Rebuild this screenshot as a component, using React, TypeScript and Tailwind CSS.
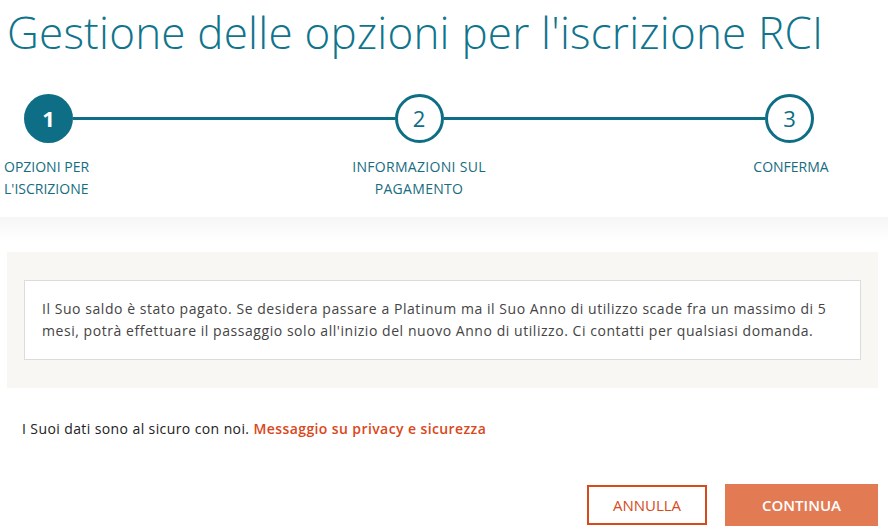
import React from "react"

const steps = [
  { n: 1, active: true },
  { n: 2, active: false },
  { n: 3, active: false },
]

function StepCircle({ n, active }: { n: number; active: boolean }) {
  return (
    <div
      className={`w-[49px] h-[49px] rounded-full flex items-center justify-center shrink-0 text-[22px] ${
        active ? "bg-[#0d6e85] text-white font-bold" : "bg-white border-[3px] border-[#0d6e85] text-[#0d6e85]"
      }`}
    >
      {n}
    </div>
  )
}

export default function App() {
  return (
    <div className="w-[888px] h-[532px] bg-white overflow-hidden font-['Open_Sans',sans-serif]">
      <h1 className="pl-[7px] pt-[6px] text-[44px] leading-[52px] font-light text-[#10748d] tracking-[0.2px] whitespace-nowrap">
        Gestione delle opzioni per l'iscrizione RCI
      </h1>

      {/* stepper */}
      <div className="mt-[36px] ml-[24px] w-[790px] flex items-center">
        {steps.map((s, i) => (
          <React.Fragment key={s.n}>
            <StepCircle n={s.n} active={s.active} />
            {i < steps.length - 1 && <div className="flex-1 h-[3px] bg-[#0d6e85]" />}
          </React.Fragment>
        ))}
      </div>

      <div className="mt-[13px] pl-[4px] flex text-[14px] leading-[22px] text-[#176c81] uppercase">
        <div className="w-[315px]">Opzioni per<br />l'iscrizione</div>
        <div className="w-[200px] text-center tracking-[0.3px]">Informazioni sul<br />pagamento</div>
        <div className="ml-[202px] w-[140px] text-center">Conferma</div>
      </div>

      {/* content */}
      <div className="mt-[17px] pt-[35px] bg-gradient-to-b from-[#f6f6f6] to-white to-[25px]">
        <div className="mx-[7px] w-[871px] bg-[#f8f7f4] px-[17px] py-[28px]">
          <div className="bg-white border border-[#dcdcdc] px-[17px] py-[17px] text-[14px] leading-[22px] text-[#444] tracking-[0.55px] whitespace-nowrap">
            Il Suo saldo è stato pagato. Se desidera passare a Platinum ma il Suo Anno di utilizzo scade fra un massimo di 5
            <br />
            mesi, potrà effettuare il passaggio solo all'inizio del nuovo Anno di utilizzo. Ci contatti per qualsiasi domanda.
          </div>
        </div>

        <p className="mt-[30px] pl-[22px] text-[14px] text-[#222] tracking-[0.4px]">
          I Suoi dati sono al sicuro con noi.{" "}
          <a className="text-[#d9471a] font-semibold">Messaggio su privacy e sicurezza</a>
        </p>

        <div className="mt-[45px] pr-[10px] flex justify-end items-center gap-[18px]">
          <button className="w-[120px] h-[40px] border-2 border-[#d84a1c] text-[#d84a1c] text-[15px] uppercase bg-white">
            Annulla
          </button>
          <button className="w-[153px] h-[42px] bg-[#e27b53] text-white text-[15px] font-semibold uppercase">
            Continua
          </button>
        </div>
      </div>
    </div>
  )
}
